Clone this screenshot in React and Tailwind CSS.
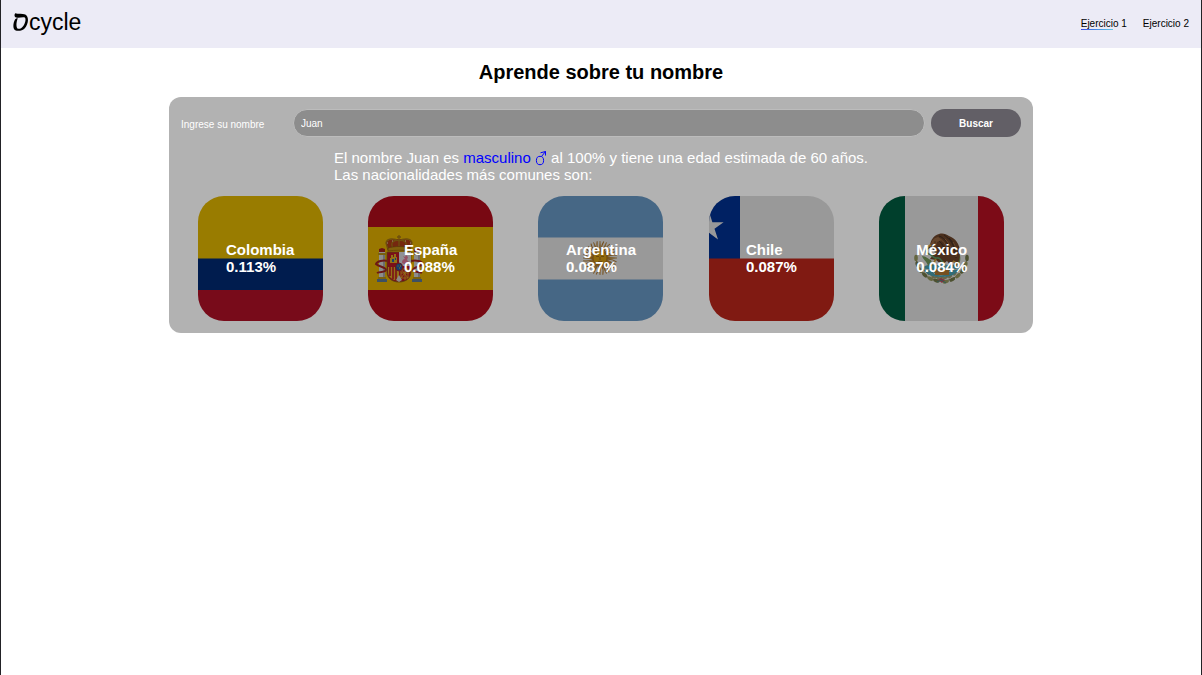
import React, { useState } from "react";

const star = (cx, cy, outer, inner) =>
  Array.from({ length: 10 }, (_, i) => {
    const r = i % 2 ? inner : outer;
    const a = (Math.PI / 5) * i - Math.PI / 2;
    return `${(cx + r * Math.cos(a)).toFixed(1)},${(cy + r * Math.sin(a)).toFixed(1)}`;
  }).join(" ");

function Colombia() {
  return (
    <>
      <rect width="125" height="63" fill="#997c00" />
      <rect y="62.5" width="125" height="31.5" fill="#001c4e" />
      <rect y="94" width="125" height="31" fill="#780b1a" />
    </>
  );
}

function Spain() {
  return (
    <>
      <rect width="125" height="125" fill="#780812" />
      <rect y="31" width="125" height="63" fill="#997700" />
      {/* pillars */}
      {[10, 45].map((x) => (
        <g key={x}>
          <rect x={x + 1} y="56" width="6" height="26" fill="#8d8d8d" />
          <rect x={x + 5} y="57" width="2" height="24" fill="#6d6d70" />
          <rect x={x} y="57" width="8" height="2" fill="#7a6110" />
          <rect x={x} y="81" width="8" height="2" fill="#7a6110" />
          <rect x={x - 1} y="83" width="10" height="3" fill="#3c5065" />
          <path d={`M${x + 1} 56v-3l3-1 3 1v3z`} fill="#6d1712" />
        </g>
      ))}
      <path d="M20 65c-5-1-11 0-12 3 3 3 10 3 10 6-1 3-6 1-9 3" fill="none" stroke="#6d1715" strokeWidth="2" />
      <path d="M43 65c5-1 11 0 12 3-3 3-10 3-10 6 1 3 6 1 9 3" fill="none" stroke="#6d1715" strokeWidth="2" />
      {/* crown */}
      <path d="M20 54l-2-7c2-4 6-4 13-4s11 0 13 4l-2 7z" fill="#75280f" />
      <path d="M20 54l-2-7c1-5 8-5 13-2 5-3 12-3 13 2l-2 7M25 52c-3-5 0-8 6-8s9 3 6 8M31 39v13M29 41h4" fill="none" stroke="#6e4f0e" strokeWidth="1.3" />
      <path d="M20 52c7-2 15-2 22 0v3c-7-1-15-1-22 0z" fill="#80600c" stroke="#54310c" strokeWidth=".6" />
      <path d="M19 47h1M24 45h1M37 45h1M42 47h1" stroke="#96917c" strokeWidth="1.2" />
      {/* shield */}
      <path d="M19 56h24v20c0 6-5 10-12 10s-12-4-12-10z" fill="#7b1018" stroke="#554015" strokeWidth=".8" />
      <path d="M31 56h12v14H31z" fill="#909095" />
      <path d="M34 67c0-3 1-4 3-4l-2-3 2 1 1-2 2 2-1 3 2 2-2 1v2l-3-1z" fill="#965064" />
      <path d="M22 67v-5h1v-3h2v2h1v-3h2v3h1v6z" fill="#927017" />
      <path d="M24 63h2v3h-2zM27 62h1v2h-1z" fill="#173f70" />
      <path d="M20 71h11v14c-7-1-11-4-11-9z" fill="#927017" />
      <path d="M22 71v9M25 71v12M28 71v14" stroke="#7b1018" strokeWidth="1.6" />
      <path d="M33 73l7 9M40 73l-7 9M33 77h8M37 72v12M33 73h7v9h-7z" fill="none" stroke="#927017" strokeWidth=".9" />
      <path d="M28 84l3-5 3 5-3 2z" fill="#8b8984" />
      <ellipse cx="31" cy="71" rx="3.5" ry="4" fill="#153d6c" stroke="#6d1718" strokeWidth="1" />
      <path d="M29.5 70h1M32 70h1M31 72h1" stroke="#937818" />
    </>
  );
}

function Argentina() {
  return (
    <>
      <rect width="125" height="125" fill="#466785" />
      <rect y="41.5" width="125" height="42" fill="#999999" />
      {Array.from({ length: 32 }, (_, i) => (
        <path
          key={i}
          d={i % 2 ? "M62 55Q60.5 50 62.5 45" : "M60.8 56L62 45L63.2 56Z"}
          fill={i % 2 ? "none" : "#7b581a"}
          stroke="#75501c"
          strokeWidth={i % 2 ? 1 : 0.4}
          transform={`rotate(${i * 11.25} 62 62)`}
        />
      ))}
      <circle cx="62" cy="62" r="7" fill="#90690c" stroke="#704712" strokeWidth=".8" />
      <path d="M58 60.5h3M63 60.5h3M62 61v3M60 65.5h4" fill="none" stroke="#65410f" strokeWidth=".8" />
    </>
  );
}

function Chile() {
  return (
    <>
      <rect width="125" height="63" fill="#999999" />
      <rect width="31" height="63" fill="#002163" />
      <rect y="62.5" width="125" height="62.5" fill="#801a12" />
      <polygon points={star(0, 31, 15.3, 5.8)} fill="#999999" />
    </>
  );
}

function Mexico() {
  return (
    <>
      <rect width="125" height="125" fill="#999999" />
      <rect width="26" height="125" fill="#003f2c" />
      <rect x="99" width="26" height="125" fill="#7c0b17" />
      {/* wreath */}
      <path d="M37 61c1 14 11 23 24 24M88 61c-1 14-11 23-24 24" fill="none" stroke="#55583a" strokeWidth="1" />
      {[0, 1, 2, 3, 4, 5].map((i) => (
        <g key={i}>
          <ellipse cx="37" cy="62" rx="1.8" ry="3.2" fill={i % 2 ? "#4d5130" : "#65663f"} transform={`rotate(${-i * 15} 62 60)`} />
          <ellipse cx="41" cy="65" rx="1.2" ry="2.4" fill="#696647" transform={`rotate(${-i * 14 - 25} 62 60)`} />
          <ellipse cx="88" cy="62" rx="1.8" ry="3.2" fill={i % 2 ? "#65663f" : "#4d5130"} transform={`rotate(${i * 15} 62 60)`} />
          <ellipse cx="84" cy="65" rx="1.2" ry="2.4" fill="#696647" transform={`rotate(${i * 14 + 25} 62 60)`} />
        </g>
      ))}
      <path d="M59 84l3-2 4 2-3 3z" fill="#80313d" />
      <path d="M58 86l4-2 5 3" fill="none" stroke="#335b58" />
      {/* lake and cactus */}
      <path d="M44 71c4-2 7-3 11-2h15c4-1 8 0 11 2-2 7-9 10-19 10s-16-3-18-10z" fill="#326c76" />
      <path d="M45 73l7 1 4 4 6 1 6-1 4-4 8-1" fill="none" stroke="#828a83" />
      <path d="M56 73h14v6H56z" fill="#755020" />
      <path d="M49 70c-1-5-5-6-6-10 4 0 6 3 9 4l2 6M73 70c4-2 5-5 5-9l3-2c1 6 0 9-5 12" fill="#4e673d" />
      {/* eagle */}
      <path d="M51 49c1-5 3-9 9-11 4-1 7 0 10 2 6 2 11 8 11 16 0 6-1 10-4 14l-3-5-2 5-4-5-5 4-6-5-6-1 5-7-4-5-4 3z" fill="#4a2f1d" />
      <path d="M60 40c6 2 11 9 11 17M65 39c6 4 11 10 11 20M57 43c6 3 9 9 9 15M70 42c5 5 8 12 7 20" fill="none" stroke="#2d2019" strokeWidth="1" />
      <path d="M59 42c5 2 8 6 9 12M66 43c4 4 7 10 7 15M74 46c3 5 4 10 3 15" fill="none" stroke="#735033" strokeWidth=".8" />
      <path d="M52 48c1-4 3-6 7-7l4 3-5 2-1 4-3 1z" fill="#65452c" />
      <path d="M51 48l-3 3 5-1" fill="#947020" />
      <circle cx="56" cy="46" r=".6" fill="#171412" />
      <path d="M50 52c-4 1-4 5 0 6s4 5 8 4 4 4 7 5" fill="none" stroke="#3d6745" strokeWidth="1.6" />
      <path d="M57 63l-3 5M65 66l-3 5M74 65l5 3" stroke="#8a681d" strokeWidth="1.6" />
      <path d="M59 69l4-3 5 3 3 4H56z" fill="#457275" />
    </>
  );
}

const countries = [
  { name: "Colombia", share: "0.113%", Flag: Colombia },
  { name: "España", share: "0.088%", Flag: Spain },
  { name: "Argentina", share: "0.087%", Flag: Argentina },
  { name: "Chile", share: "0.087%", Flag: Chile },
  { name: "México", share: "0.084%", Flag: Mexico },
];

function Logo() {
  return (
    <a href="#inicio" aria-label="Dcycle" className="flex items-center pb-1 text-black">
      <svg viewBox="0 0 16 18" className="h-[18px] w-4" aria-hidden="true">
        <path
          fill="currentColor"
          d="M2.2 0.2C5 1.4 9.5 0.2 12.3 1.6C16.6 4 15.2 11.5 11.6 15.4C9.6 17.6 5 18.6 2.2 17.2C-0.6 15.6 0.2 10 2 6.6C2.6 5.6 3.6 5.2 4.8 5.2C3.4 8.6 2.8 13.6 4.4 15.4C6 16.6 9 15.2 10.8 12.2C12.6 9 13 5.6 11.8 4.6C9.6 3.8 6 5.4 3.2 4.6C1.4 4 1 1.8 2.2 0.2Z"
        />
      </svg>
      <span className="text-[23px] leading-6">cycle</span>
    </a>
  );
}

function MaleIcon() {
  return (
    <svg viewBox="0 0 12 16" className="inline-block h-4 w-3 align-[-3px]" fill="none" stroke="currentColor" role="img" aria-label="♂">
      <ellipse cx="5" cy="10.5" rx="3.6" ry="4.2" />
      <path d="M6.5 6.5L10.5 1.5M5.5 2.8L10.5 1.5L10.5 5.5" />
    </svg>
  );
}

export default function App() {
  const [name, setName] = useState("Juan");
  return (
    <div className="min-h-screen border-x border-[#222226] bg-white font-['Liberation_Sans',Arial,sans-serif] text-black">
      <header className="flex h-12 items-center justify-between bg-[#ecebf6] px-3">
        <Logo />
        <nav className="flex gap-4 text-[10px] leading-3">
          <a href="#ejercicio-1" className="bg-linear-to-r from-[#3b49df] to-[#68c8e4] bg-[length:70%_1px] bg-bottom-left bg-no-repeat">
            Ejercicio 1
          </a>
          <a href="#ejercicio-2">Ejercicio 2</a>
        </nav>
      </header>

      <main>
        <h1 className="py-3 text-center text-[20px] leading-[25px] font-bold">Aprende sobre tu nombre</h1>

        <section className="mx-auto w-[72%] rounded-xl bg-[#b2b2b2] py-3 text-white">
          <form className="flex items-center gap-1.5 px-3" onSubmit={(e) => e.preventDefault()}>
            <label htmlFor="nombre" className="w-[106px] shrink-0 pt-1 text-[10px] leading-3">
              Ingrese su nombre
            </label>
            <input
              id="nombre"
              type="text"
              value={name}
              onChange={(e) => setName(e.target.value)}
              className="h-7 min-w-0 flex-1 rounded-full border border-[#bcbcbc] bg-[#8d8d8d] px-[7px] text-[10px] leading-3 text-white outline-none"
            />
            <button type="submit" className="h-7 w-[90px] shrink-0 rounded-full bg-[#625f66] pt-px text-[10px] leading-3 font-bold">
              Buscar
            </button>
          </form>

          <p className="mx-auto mt-3 w-fit text-[15px] leading-[17px]">
            El nombre Juan es{" "}
            <span className="text-[#0000ff]">
              masculino <MaleIcon />
            </span>{" "}
            al 100% y tiene una edad estimada de 60 años.
            <br />
            Las nacionalidades más comunes son:
          </p>

          <ul className="mt-[13px] grid grid-cols-5 justify-items-center px-1.5">
            {countries.map(({ name: country, share, Flag }) => (
              <li key={country} className="grid size-[125px] place-items-center overflow-hidden rounded-[26px]">
                <svg viewBox="0 0 125 125" className="col-start-1 row-start-1 size-full" aria-hidden="true">
                  <Flag />
                </svg>
                <p className="z-10 col-start-1 row-start-1 pb-px text-[15px] leading-[17px] font-bold">
                  {country}
                  <br />
                  {share}
                </p>
              </li>
            ))}
          </ul>
        </section>
      </main>
    </div>
  );
}
